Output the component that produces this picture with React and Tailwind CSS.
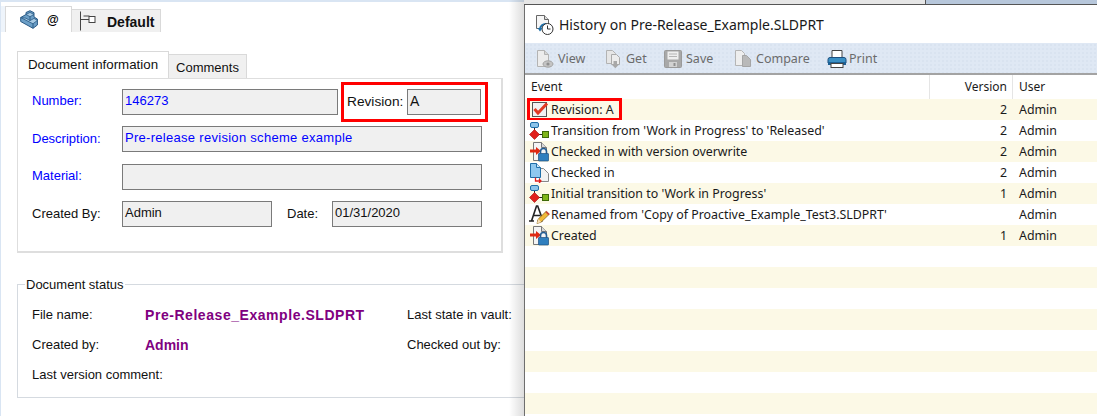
import React from "react";

const leftFont = { fontFamily: '"Liberation Sans", Arial, sans-serif' };
const rightFont = { fontFamily: '"Noto Sans", Tahoma, sans-serif' };

const TransitionIcon = () => (
  <svg width="22" height="21" viewBox="0 0 22 21" className="shrink-0">
    <path d="M5.5 7v4M10 14.5h3.5" stroke="#222" strokeWidth="1" fill="none" />
    <rect x="1.5" y="2.5" width="8" height="5" rx="1.5" fill="#8cc4ea" stroke="#1f6fa8" />
    <path d="M5.5 9.5l5 5-5 5-5-5z" fill="#e0201c" stroke="#a01010" strokeWidth="0.6" />
    <rect x="13.5" y="11.5" width="6" height="6" fill="#7fb61a" stroke="#3d6a08" />
  </svg>
);

const LockDocIcon = () => (
  <svg width="22" height="21" viewBox="0 0 22 21" className="shrink-0">
    <path d="M4.5 1.5h8l5 5v13h-13z" fill="#f4f4f4" stroke="#777" />
    <path d="M12.5 1.5v5h5" fill="#d8d8d8" stroke="#777" />
    <path d="M1 8.5h6V6l5 4-5 4v-2.5H1z" fill="#e02a12" />
    <path d="M11.5 12.5v-2a3 3 0 0 1 6 0v2" fill="none" stroke="#235d93" strokeWidth="1.6" />
    <rect x="9.5" y="12.5" width="10" height="7.5" rx="0.5" fill="#2f7fbe" stroke="#1c4f7f" strokeWidth="0.7" />
  </svg>
);

const CheckedInIcon = () => (
  <svg width="22" height="21" viewBox="0 0 22 21" className="shrink-0">
    <path d="M10.5 6.5h4l5 5v8h-9z" fill="#f2f2f2" stroke="#888" />
    <path d="M1.5 1.5h6l4 4v10h-10z" fill="#8ec8ef" stroke="#1f6fa8" />
    <path d="M7.5 1.5v4h4" fill="#cfe8f8" stroke="#1f6fa8" />
    <path d="M6.5 15.5v3.5h5M10 17l2 2-2 2" fill="none" stroke="#e0201c" strokeWidth="1.3" />
  </svg>
);

const RenameIcon = () => (
  <svg width="22" height="21" viewBox="0 0 22 21" className="shrink-0">
    <path d="M0 17h5M8.5 17h5M2.5 17L7.5 2h1.2L13 14M4.5 11.5h6.5" fill="none" stroke="#222" strokeWidth="1.6" />
    <path d="M8 19.5l1.2-4.4 8-7.8 3 3-8 7.8z" fill="#f0b93a" stroke="#7a5810" strokeWidth="0.7" />
    <path d="M8 19.5l1.2-4.4 3 3z" fill="#f6dfb8" />
    <path d="M16.4 8.2l1.3-1.3 3 3-1.3 1.3z" fill="#c9463a" />
  </svg>
);

const CheckIcon = () => (
  <svg width="22" height="21" viewBox="0 0 22 21" className="shrink-0">
    <rect x="3.5" y="3.5" width="14" height="14" fill="#f1f1f1" stroke="#555" />
    <path d="M5.5 10l3.5 4 9-9.5" fill="none" stroke="#e23a22" strokeWidth="3" />
  </svg>
);

const HistoryIcon = () => (
  <svg width="22" height="22" viewBox="0 0 22 22">
    <path d="M2.5 1.5h8l4 4v9h-12v-13z" fill="#f6f6f6" stroke="#666" />
    <path d="M10.5 1.5v4h4" fill="#ddd" stroke="#666" />
    <path d="M6 15a5.5 5.5 0 0 1 6-5" fill="none" stroke="#1f6fa8" strokeWidth="2" />
    <circle cx="13.5" cy="15" r="5.5" fill="#fff" stroke="#333" />
    <path d="M13.5 11.5V15h3" fill="none" stroke="#333" />
    <path d="M3.5 14h5L6 17.5z" fill="#1f6fa8" />
  </svg>
);

const ViewIcon = () => (
  <svg width="18" height="20" viewBox="0 0 18 20">
    <path d="M1.5 1.5h7l4 4v12h-11z" fill="#ececec" stroke="#b3b3b3" />
    <path d="M8.5 1.5v4h4" fill="#d5d5d5" stroke="#b3b3b3" />
    <ellipse cx="12" cy="15" rx="5" ry="3.2" fill="#c4c4c4" stroke="#a3a3a3" />
    <circle cx="12" cy="15" r="1.6" fill="#8f8f8f" />
  </svg>
);

const GetIcon = () => (
  <svg width="18" height="20" viewBox="0 0 18 20">
    <path d="M1.5 1.5h6l3 3v10h-9z" fill="#e6e6e6" stroke="#b3b3b3" />
    <path d="M6.5 5.5h5l3 3v7h-8z" fill="#ececec" stroke="#aaa" />
    <path d="M8.5 12h3.5v3.5H14l-3.7 3.7-3.7-3.7h1.9z" fill="#a8a8a8" />
  </svg>
);

const SaveIcon = () => (
  <svg width="18" height="20" viewBox="0 0 18 20">
    <rect x="0.5" y="1.5" width="17" height="17" rx="1" fill="#a8a8a8" stroke="#9a9a9a" />
    <rect x="3.5" y="2.5" width="11" height="8" fill="#eee" />
    <path d="M5 5h8M5 7.5h8" stroke="#b4b4b4" />
    <rect x="5" y="13" width="8" height="5" fill="#d2d2d2" />
    <rect x="9.5" y="14" width="2" height="3" fill="#8f8f8f" />
  </svg>
);

const CompareIcon = () => (
  <svg width="18" height="20" viewBox="0 0 18 20">
    <path d="M1.5 1.5h6l3 3v12h-9z" fill="#eee" stroke="#b5b5b5" />
    <path d="M8.5 6.5h4l4 4v7h-8z" fill="#b9b9b9" stroke="#a5a5a5" />
  </svg>
);

const PrintIcon = () => (
  <svg width="20" height="20" viewBox="0 0 20 20">
    <path d="M5 9V1.5h10V9" fill="#fff" stroke="#444" />
    <path d="M1 14v-3.5a2 2 0 0 1 2-2h14a2 2 0 0 1 2 2V14z" fill="#3a8fc4" stroke="#1c4f7f" />
    <rect x="1" y="13" width="18" height="3" fill="#1d5f93" />
    <rect x="4" y="14.5" width="12" height="4" fill="#fff" stroke="#444" />
  </svg>
);

const PartIcon = () => (
  <svg width="18" height="19" viewBox="0 0 18 19" className="shrink-0">
    <path d="M0.7 7.5L6 4.5V2.5L10 0.7l4 2V7l3.4 2v6L13 18.3 0.7 11.5z" fill="#6c9fc7" stroke="#2a5a85" />
    <path d="M6 4.5l4 2.2 4-2.2L10 2.4zM0.7 7.5L13 13.8l4.4-3.4-3.4-2-4 2.2-4-2.4z" fill="#a9cbe4" stroke="#2a5a85" strokeWidth="0.8" />
    <path d="M13 13.8v4.5M10 6.7v3.9" fill="none" stroke="#2a5a85" />
  </svg>
);

const BranchIcon = () => (
  <svg width="18" height="20" viewBox="0 0 18 20" className="shrink-0">
    <path d="M1.5 0.5v19M1.5 8.5H10M4.5 5h6" fill="none" stroke="#444" />
    <rect x="10" y="5.5" width="6" height="6" fill="#fff" stroke="#444" />
  </svg>
);

const tools = [
  { label: "View", icon: <ViewIcon />, width: "w-[69px]", gap: "gap-[4px]" },
  { label: "Get", icon: <GetIcon />, width: "w-[59px]", gap: "gap-[3px]" },
  { label: "Save", icon: <SaveIcon />, width: "w-[70px]", gap: "gap-[4px]" },
  { label: "Compare", icon: <CompareIcon />, width: "w-[93px]", gap: "gap-[4px]" },
  { label: "Print", icon: <PrintIcon />, width: "w-[60px]", gap: "gap-[2px]" },
];

const events = [
  { icon: <CheckIcon />, text: "Revision: A", version: "2", user: "Admin", marked: true },
  { icon: <TransitionIcon />, text: "Transition from 'Work in Progress' to 'Released'", version: "2", user: "Admin" },
  { icon: <LockDocIcon />, text: "Checked in with version overwrite", version: "2", user: "Admin" },
  { icon: <CheckedInIcon />, text: "Checked in", version: "2", user: "Admin" },
  { icon: <TransitionIcon />, text: "Initial transition to 'Work in Progress'", version: "1", user: "Admin" },
  { icon: <RenameIcon />, text: "Renamed from 'Copy of Proactive_Example_Test3.SLDPRT'", version: "", user: "Admin" },
  { icon: <LockDocIcon />, text: "Created", version: "1", user: "Admin" },
  {}, {}, {}, {}, {}, {}, {}, {}, {},
];

const Field = ({ width, blue, className = "text-[13px]", children }) => (
  <div
    className={`${width} h-[26px] shrink-0 border border-[#7a7a7a] bg-[#f0f0f0] pl-[2px] pt-[2px] leading-[18px] ${className} ${
      blue ? "text-[#0000ff]" : "text-[#111]"
    }`}
  >
    {children}
  </div>
);

const Label = ({ blue, className = "", children }) => (
  <div className={`w-[90px] shrink-0 text-[13px] ${blue ? "text-[#0000ff]" : "text-[#111]"} ${className}`}>{children}</div>
);

const DocumentPanel = () => (
  <div className="relative w-[524px] shrink-0 overflow-hidden border-l border-[#d9e5f3]" style={leftFont}>
    <div className="h-[2px] bg-[#d9e5f3]" />

    {/* Top tabs */}
    <div className="mt-[4px] flex h-[26px] items-end">
      <div className="h-full w-[4px] bg-[#eef4fb]" />
      <div className="flex h-[26px] w-[67px] items-center border-l border-r border-t border-[#d9d9d9] bg-white pl-[14px]">
        <PartIcon />
        <span className="ml-[9px] text-[12px] font-bold text-black">@</span>
      </div>
      <div className="flex h-[23px] w-[89px] items-center border-r border-t border-[#d9d9d9] bg-[#f0f0f0] pl-[7px]">
        <BranchIcon />
        <span className="ml-[10px] pt-[2px] text-[14px] font-bold text-[#111]">Default</span>
      </div>
    </div>

    {/* Inner tabs */}
    <div className="ml-[16px] mt-[19px] flex h-[27px] items-end">
      <div className="z-10 flex h-[27px] w-[152px] items-center justify-center border-l border-r border-t border-[#d9d9d9] bg-white text-[13.3px] text-[#111]">
        Document information
      </div>
      <div className="flex h-[24px] w-[78px] items-center justify-center border-r border-t border-[#d9d9d9] bg-[#f0f0f0] pt-[2px] text-[13px] text-[#111]">
        Comments
      </div>
    </div>

    {/* Form box */}
    <div className="ml-[16px] h-[175px] w-[486px] border-b-2 border-l border-r-2 border-t border-[#dedede] pl-[14px] pt-[10px]">
      <div className="flex h-[26px] items-center">
        <Label blue className="pb-[2px]">Number:</Label>
        <Field width="w-[216px]" blue>146273</Field>
        <div className="ml-[3px] flex h-[40px] w-[147px] shrink-0 items-center border-[3px] border-[#f00] pl-[3px]">
          <span className="w-[60px] text-[13.7px] text-[#111]">Revision:</span>
          <Field width="w-[74px]" className="text-[14px]">A</Field>
        </div>
      </div>
      <div className="mt-[11px] flex items-center">
        <Label blue>Description:</Label>
        <Field width="w-[360px]" blue className="text-[13px] tracking-[0.29px]">Pre-release revision scheme example</Field>
      </div>
      <div className="mt-[12px] flex items-center">
        <Label blue className="pb-[2px]">Material:</Label>
        <Field width="w-[360px]" />
      </div>
      <div className="mt-[11px] flex items-center">
        <Label>Created By:</Label>
        <Field width="w-[150px]">Admin</Field>
        <span className="ml-[15px] w-[45px] text-[13px] text-[#111]">Date:</span>
        <Field width="w-[150px]">01/31/2020</Field>
      </div>
    </div>

    {/* Document status */}
    <fieldset className="ml-[16px] mt-[24px] h-[121px] w-[540px] border border-[#d5dae0]">
      <legend className="ml-[7px] px-[1px] text-[13px] leading-[15px] text-[#111]">Document status</legend>
      <div className="pl-[14px] pt-[8px] text-[13px] text-[#111]">
        <div className="flex h-[30px] items-center">
          <span className="w-[113px]">File name:</span>
          <span className="w-[262px] text-[14px] font-bold tracking-[0.55px] text-[#800080]">Pre-Release_Example.SLDPRT</span>
          <span>Last state in vault:</span>
        </div>
        <div className="flex h-[30px] items-center">
          <span className="w-[113px]">Created by:</span>
          <span className="w-[262px] text-[14px] font-bold text-[#800080]">Admin</span>
          <span>Checked out by:</span>
        </div>
        <div className="flex h-[30px] items-center">Last version comment:</div>
      </div>
    </fieldset>

    {/* Shadow cast by the history window */}
    <div className="absolute bottom-0 right-0 top-0 w-[15px] bg-gradient-to-r from-transparent to-[#00000022]" />
  </div>
);

const HistoryWindow = () => (
  <div className="min-w-0 flex-1" style={rightFont}>
    <div className="flex h-[5px] border-b border-[#555]">
      <div className="w-[401px] bg-[#e6e6e6]" />
      <div className="flex-1 border-l border-[#555] bg-[#b7c7db]" />
    </div>
    <div className="h-[411px] border-l border-[#6e6e6e] bg-white">
      {/* Title */}
      <div className="flex h-[38px] items-center pl-[9px] pt-[1px]">
        <HistoryIcon />
        <span className="ml-[3px] text-[14px] text-[#1a1a1a]">History on Pre-Release_Example.SLDPRT</span>
      </div>

      {/* Toolbar */}
      <div className="flex h-[32px] items-center border-b-2 border-[#a3a3a3] bg-[#dfe8f4] bg-[radial-gradient(#d9e3f0_1px,transparent_1px)] bg-[length:4px_4px] pl-[11px] pt-[2px]">
        {tools.map((tool) => (
          <div key={tool.label} className={`flex shrink-0 items-center ${tool.width} ${tool.gap}`}>
            {tool.icon}
            <span className="text-[12.5px] text-[#6b6b6b]">{tool.label}</span>
          </div>
        ))}
      </div>

      {/* Column headers */}
      <div className="flex h-[24px] items-center text-[12px] text-[#1a1a1a]">
        <div className="w-[404px] pl-[6px]">Event</div>
        <div className="flex h-full w-[84px] items-center justify-end border-l border-r border-[#e5e5e5] pr-[5px]">Version</div>
        <div className="pl-[6px]">User</div>
      </div>

      {/* Rows */}
      {events.map((row, i) => (
        <div
          key={i}
          className={`relative flex h-[21px] items-center text-[12.4px] text-[#1a1a1a] ${i % 2 === 0 ? "bg-[#fcf9e6]" : "bg-white"}`}
        >
          <div className="flex w-[405px] items-center pl-[4px]">
            {row.icon}
            {row.text && <span className="whitespace-nowrap pt-[2px]">{row.text}</span>}
          </div>
          <div className="w-[78px] pr-[1px] pt-[2px] text-right">{row.version}</div>
          <div className="pl-[11px] pt-[2px]">{row.user}</div>
          {row.marked && (
            <div className="absolute left-[2px] top-[-1px] h-[23px] w-[95px] border-[3px] border-[#f00]" />
          )}
        </div>
      ))}
    </div>
  </div>
);

export default function App() {
  return (
    <div className="flex h-[416px] w-[1097px] overflow-hidden bg-white">
      <DocumentPanel />
      <HistoryWindow />
    </div>
  );
}
